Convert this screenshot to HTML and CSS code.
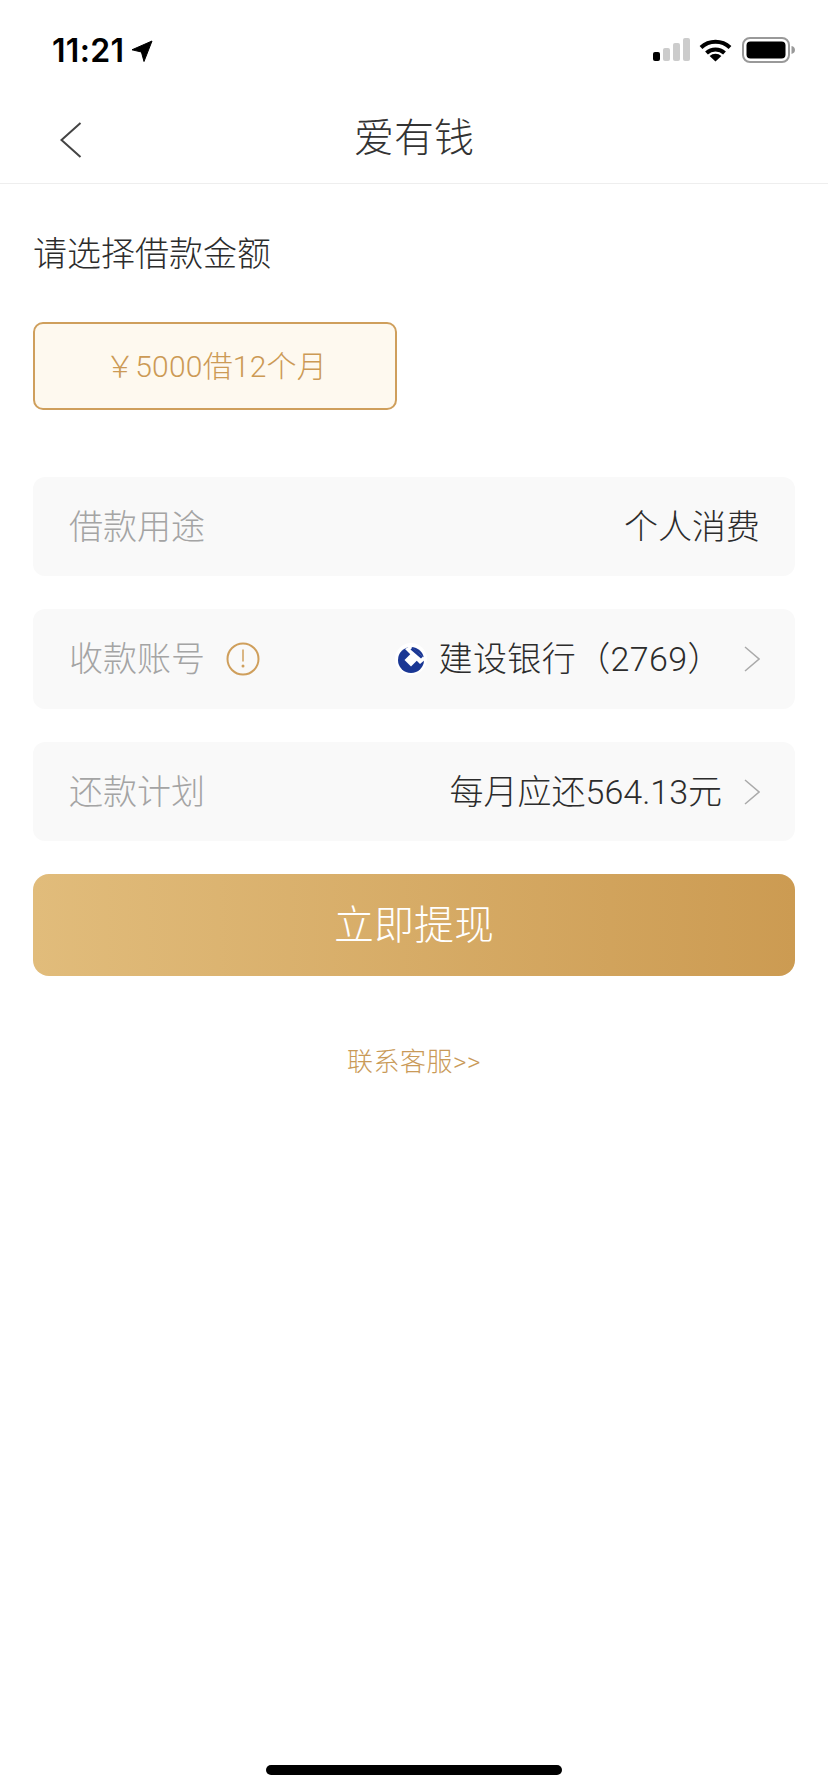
FILE: index.html
```html
<!DOCTYPE html>
<html lang="zh-CN">
<head>
    <meta charset="UTF-8">
    <meta name="viewport" content="width=device-width, initial-scale=1.0">
    <title>爱有钱</title>
    <link rel="stylesheet" href="styles.css">
</head>
<body>
    <div class="status-bar">
        <div class="status-time">
            <span>11:21</span>
            <svg class="location-icon" width="22" height="22" viewBox="0 0 22 22"><path d="M21 1 13 21.5 10.4 12 1 9.8Z" fill="#000" stroke="#000" stroke-width="1" stroke-linejoin="round"/></svg>
        </div>
        <div class="status-icons">
            <svg class="signal-icon" width="38" height="24" viewBox="0 0 38 24">
                <rect x="0" y="14" width="7" height="9" rx="2" fill="#000"/>
                <rect x="10" y="10" width="7" height="13" rx="2" fill="#ccc"/>
                <rect x="20" y="5" width="7" height="18" rx="2" fill="#ccc"/>
                <rect x="30" y="0" width="7" height="23" rx="2" fill="#ccc"/>
            </svg>
            <svg width="33" height="24" viewBox="0 0 33 24">
                <path d="M2 9.500a21 21 0 0 1 29 0M7.500 15a13 13 0 0 1 18 0" fill="none" stroke="#000" stroke-width="4"/>
                <path d="M16.500 23.500 10.600 18a9 9 0 0 1 11.800 0Z" fill="#000"/>
            </svg>
            <svg width="53" height="26" viewBox="0 0 53 26">
                <rect x="1" y="1" width="46" height="24" rx="7" fill="none" stroke="#999" stroke-width="2"/>
                <rect x="4.500" y="4.500" width="39" height="17" rx="4" fill="#000"/>
                <path d="M49.500 9c2.500.6 3.500 2.200 3.500 4s-1 3.400-3.500 4Z" fill="#999"/>
            </svg>
        </div>
    </div>

    <header class="nav-bar">
        <svg class="back-icon" width="22" height="36" viewBox="0 0 22 36"><path d="M20.500 1 1.500 18l19 17" fill="none" stroke="#444" stroke-width="2"/></svg>
        <h1>爱有钱</h1>
    </header>

    <main class="content">
        <h2>请选择借款金额</h2>
        <div class="amount-option">￥5000借12个月</div>

        <div class="form-row form-row-first">
            <span class="row-label">借款用途</span>
            <span class="row-value">个人消费</span>
        </div>

        <div class="form-row form-row-tall">
            <span class="row-label">收款账号</span>
            <svg class="info-icon" width="34" height="34" viewBox="0 0 34 34">
                <circle cx="17" cy="17" r="15.500" fill="none" stroke="#cf9f5c" stroke-width="2"/>
                <path d="M17 7.500v12" stroke="#cf9f5c" stroke-width="1.500"/>
                <circle cx="17" cy="24" r="1.500" fill="#cf9f5c"/>
            </svg>
            <div class="row-end">
                <svg class="bank-logo" width="32" height="32" viewBox="0 0 32 32">
                    <circle cx="16" cy="16" r="16" fill="#fff"/>
                    <circle cx="16" cy="17" r="13" fill="#1a3794"/>
                    <path d="M15 3 31 16 25 21 10 6Z" fill="#fff"/>
                    <path d="M17.500 4.500 28 13.500 26 15.500 15.500 6.500Z" fill="#1a3794"/>
                    <path d="M16 10.500 22.500 17 16 23.500 9.500 17Z" fill="#fff"/>
                </svg>
                <span class="row-value bank-name">建设银行（2769）</span>
                <svg class="chevron" width="16" height="26" viewBox="0 0 16 26"><path d="M1 1 15 13 1 25" fill="none" stroke="#aaa" stroke-width="1.500"/></svg>
            </div>
        </div>

        <div class="form-row">
            <span class="row-label">还款计划</span>
            <div class="row-end">
                <span class="row-value">每月应还564.13元</span>
                <svg class="chevron" width="16" height="26" viewBox="0 0 16 26"><path d="M1 1 15 13 1 25" fill="none" stroke="#aaa" stroke-width="1.500"/></svg>
            </div>
        </div>

        <button class="submit-btn" type="button"><span>立即提现</span></button>
        <a class="service-link" href="#">联系客服&gt;&gt;</a>
    </main>

    <div class="home-indicator"></div>
</body>
</html>
```

FILE: styles.css
```css
* {
    box-sizing: border-box;
}

body {
    font-family: Roboto, "Noto Sans CJK SC", sans-serif;
    font-weight: 300;
    background-color: #fff;
    color: #333;
    margin: 0;
    height: 1792px;
    position: relative;
    overflow: hidden;
}

.status-bar {
    height: 92px;
    padding: 33px 33px 0 52px;
    display: flex;
    justify-content: space-between;
    align-items: flex-start;
}

.status-time {
    display: flex;
    align-items: center;
    gap: 7px;
    padding-top: 2px;
    font-family: Inter, sans-serif;
    font-size: 32px;
    font-weight: 600;
    line-height: 32px;
    letter-spacing: 0.3px;
    color: #000;
}

.status-icons {
    display: flex;
    align-items: center;
    gap: 10px;
    padding-top: 4px;
}

.signal-icon {
    margin-right: -2px;
}

.nav-bar {
    height: 92px;
    padding-top: 2px;
    border-bottom: 1px solid #eee;
    display: flex;
    align-items: center;
    justify-content: center;
    position: relative;
}

.back-icon {
    position: absolute;
    left: 60px;
    top: 30px;
}

h1 {
    margin: 0;
    font-size: 40px;
    font-weight: 300;
    color: #333;
    line-height: 56px;
}

.content {
    padding: 46px 33px 0;
}

h2 {
    margin: 0;
    font-size: 34px;
    font-weight: 300;
    line-height: 48px;
    color: #2c2c2c;
}

.amount-option {
    width: 364px;
    height: 88px;
    margin-top: 44px;
    padding: 0 0 4px 2px;
    border: 2px solid #cf9f5c;
    border-radius: 10px;
    background-color: #fef9ef;
    color: #cc9a55;
    font-size: 30px;
    letter-spacing: 0.2px;
    display: flex;
    align-items: center;
    justify-content: center;
}

.form-row {
    height: 99px;
    margin-bottom: 33px;
    padding: 0 35px 0 36px;
    background-color: #f9f9f9;
    border-radius: 12px;
    display: flex;
    align-items: center;
    font-size: 34px;
}

.form-row-first {
    margin-top: 67px;
    justify-content: space-between;
}

.form-row-tall {
    height: 100px;
}

.row-label,
.row-value {
    padding-bottom: 5px;
}

.row-label {
    color: #a4a4a4;
}

.row-value {
    color: #2c2c2c;
}

.info-icon {
    margin-left: 21px;
}

.row-end {
    margin-left: auto;
    display: flex;
    align-items: center;
}

.bank-logo {
    margin-right: 12px;
}

.bank-name {
    letter-spacing: 0.4px;
}

.chevron {
    margin-left: 22px;
}

.submit-btn {
    display: block;
    width: 100%;
    height: 102px;
    padding-bottom: 8px;
    border: none;
    border-radius: 16px;
    background: linear-gradient(90deg, #e1bc7b, #cc9b52);
    color: #fff;
    font-family: inherit;
    font-weight: 300;
    font-size: 40px;
}

.service-link {
    display: block;
    margin-top: 68px;
    text-align: center;
    font-size: 26px;
    line-height: 36px;
    letter-spacing: 0.5px;
    color: #c99a58;
    text-decoration: none;
}

.home-indicator {
    position: absolute;
    left: 266px;
    bottom: 17px;
    width: 296px;
    height: 10px;
    border-radius: 5px;
    background-color: #000;
}
```
